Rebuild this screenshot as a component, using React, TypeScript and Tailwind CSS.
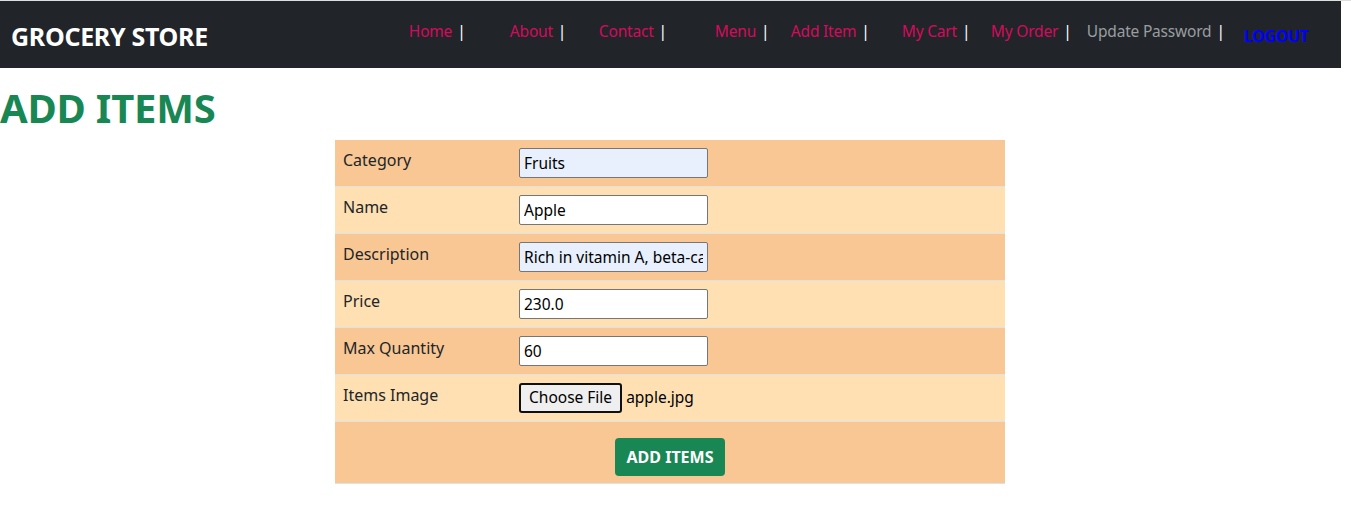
import React from 'react';

interface NavLink {
  label: string;
  width: string;
  color: string;
}

// widths are the distance from one link's start to the next
const navLinks: NavLink[] = [
  { label: 'Home', width: 'w-[101px]', color: 'text-[#d60a5c]' },
  { label: 'About', width: 'w-[89px]', color: 'text-[#d60a5c]' },
  { label: 'Contact', width: 'w-[116px]', color: 'text-[#d60a5c]' },
  { label: 'Menu', width: 'w-[76px]', color: 'text-[#d60a5c]' },
  { label: 'Add Item', width: 'w-[111px]', color: 'text-[#d60a5c]' },
  { label: 'My Cart', width: 'w-[89px]', color: 'text-[#d60a5c]' },
  { label: 'My Order', width: 'w-[96px]', color: 'text-[#d60a5c]' },
  { label: 'Update Password', width: 'w-[157px]', color: 'text-[#9a9da0]' },
];

const fields = [
  { label: 'Category', value: 'Fruits', filled: true },
  { label: 'Name', value: 'Apple', filled: false },
  { label: 'Description', value: 'Rich in vitamin A, beta-carotene and fibre', filled: true },
  { label: 'Price', value: '230.0', filled: false },
  { label: 'Max Quantity', value: '60', filled: false },
];

const rowBg = (i: number) => (i % 2 === 0 ? 'bg-[#f8c794]' : 'bg-[#fee0b3]');

const App = (): JSX.Element => {
  return (
    <div className="min-h-screen bg-white border-t border-[#dedede] font-['Noto_Sans','Liberation_Sans',sans-serif] text-[#212529]">
      <div className="w-[1341px]">
        {/* Navbar */}
        <nav className="h-[67px] bg-[#212529] flex items-center">
          <span className="ml-[11px] mt-[3px] text-[25px] font-bold text-white tracking-[-0.3px] leading-none">GROCERY STORE</span>
          <div className="ml-[201px] mb-[5px] flex items-center text-[15.5px] tracking-[-0.2px] leading-none">
            {navLinks.map(link => (
              <div key={link.label} className={`${link.width} flex items-center whitespace-nowrap`}>
                <span className={link.color}>{link.label}</span>
                <span className="ml-[5px] text-white">|</span>
              </div>
            ))}
            <span className="mt-[7px] text-[16px] font-bold text-[#0000ff] tracking-[-0.4px]">LOGOUT</span>
          </div>
        </nav>

        <h1 className="mt-[16px] mb-[8px] text-[40px] leading-[48px] font-bold text-[#198754] tracking-[-0.2px]">ADD ITEMS</h1>

        {/* Form table */}
        <div className="w-[670px] ml-[335px] text-[16px]">
          {fields.map((f, i) => (
            <div key={f.label} className={`${rowBg(i)} border-b border-[#dee2e6] flex`}>
              <div className="w-[176px] p-2 leading-[24px]">{f.label}</div>
              <div className="p-2">
                <input
                  readOnly
                  value={f.value}
                  className={`w-[189px] h-[30px] px-[4px] border border-[#767676] rounded-[2px] text-[15.5px] text-black outline-none ${f.filled ? 'bg-[#e8f0fe]' : 'bg-white'}`}
                />
              </div>
            </div>
          ))}
          <div className="bg-[#fee0b3] border-b border-[#dee2e6] flex">
            <div className="w-[176px] p-2 leading-[24px]">Items Image</div>
            <div className="p-2 flex items-center">
              <button className="h-[30px] px-[8px] border-2 border-[#101010] rounded-[3px] bg-[#efefef] text-[15.5px] text-black">
                Choose File
              </button>
              <span className="ml-[4px] text-[15.5px] text-black">apple.jpg</span>
            </div>
          </div>
          <div className="bg-[#f8c794] border-b border-[#dee2e6] pt-[16px] pb-[7px] flex justify-center">
            <button className="h-[38px] px-3 rounded-[4px] bg-[#198754] text-white font-bold text-[16px]">ADD ITEMS</button>
          </div>
        </div>
      </div>
    </div>
  );
};

export default App;
